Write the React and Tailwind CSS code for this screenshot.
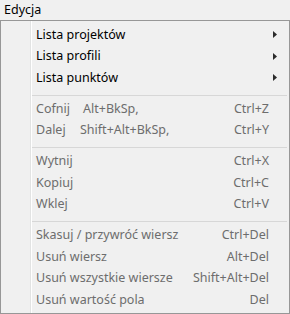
import React from "react";

const groups = [
  [
    { label: "Lista projektów", sub: true, on: true },
    { label: "Lista profili", sub: true, on: true },
    { label: "Lista punktów", sub: true, on: true },
  ],
  [
    { label: "Cofnij", mid: "Alt+BkSp,", midW: "w-[47px]", key: "Ctrl+Z" },
    { label: "Dalej", mid: "Shift+Alt+BkSp,", midW: "w-[44px]", key: "Ctrl+Y" },
  ],
  [
    { label: "Wytnij", key: "Ctrl+X" },
    { label: "Kopiuj", key: "Ctrl+C" },
    { label: "Wklej", key: "Ctrl+V" },
  ],
  [
    { label: "Skasuj / przywróć wiersz", key: "Ctrl+Del" },
    { label: "Usuń wiersz", key: "Alt+Del" },
    { label: "Usuń wszystkie wiersze", key: "Shift+Alt+Del" },
    { label: "Usuń wartość pola", key: "Del" },
  ],
];

function Arrow() {
  return (
    <svg width="4" height="7" viewBox="0 0 4 7" className="block">
      <path d="M0 0 L4 3.5 L0 7 Z" fill="#2b2b2b" />
    </svg>
  );
}

function Row({ item }) {
  const color = item.on ? "text-black" : "text-[#6d6d6d]";
  return (
    <div className={`flex h-[21.5px] items-center pl-[35px] pr-[20px] ${color}`}>
      {item.mid ? (
        <>
          <span className={`${item.midW} shrink-0`}>{item.label}</span>
          <span>{item.mid}</span>
        </>
      ) : (
        <span>{item.label}</span>
      )}
      <span className="ml-auto">{item.key}</span>
      {item.sub && (
        <span className="-mr-[15px] ml-auto pr-[7px]">
          <Arrow />
        </span>
      )}
    </div>
  );
}

export default function App() {
  return (
    <div
      className="h-[314px] w-[290px] overflow-hidden bg-[#f0f0f0] text-[12.5px] leading-none"
      style={{ fontFamily: '"Noto Sans", "Liberation Sans", sans-serif' }}
    >
      <div className="flex h-[20px] items-center pl-[4px] pt-px text-black">Edycja</div>
      <div className="relative w-[290px] border border-[#979797] pb-[2px] pt-[3px]">
        <div className="absolute bottom-0 left-[29px] top-0 w-px bg-[#e2e3e3]" />
        <div className="absolute bottom-0 left-[30px] top-0 w-px bg-white" />
        {groups.map((g, gi) => (
          <div key={gi}>
            {gi > 0 && (
              <div className="h-[9.5px] pl-[29px] pr-[2px] pt-[6px]">
                <div className="h-px bg-[#d7d7d7]" />
              </div>
            )}
            {g.map((it) => (
              <Row key={it.label} item={it} />
            ))}
          </div>
        ))}
      </div>
    </div>
  );
}
